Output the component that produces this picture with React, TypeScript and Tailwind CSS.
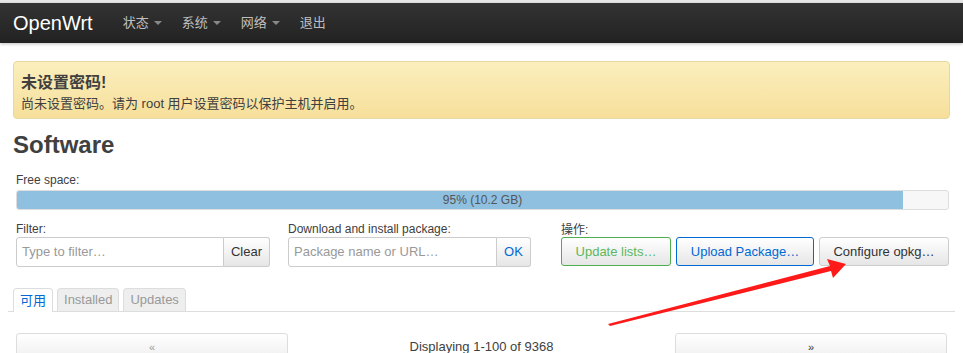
const FONT = "font-['Liberation_Sans','Noto_Sans_CJK_SC',sans-serif]";

const MENU = [
  { label: '状态', caret: true },
  { label: '系统', caret: true },
  { label: '网络', caret: true },
  { label: '退出', caret: false },
];

function Caret() {
  return <span className="ml-[5px] inline-block h-0 w-0 border-x-[4px] border-t-[4px] border-x-transparent border-t-[#888] align-middle" />;
}

export default function App() {
  return (
    <div className={`relative h-[353px] w-[963px] overflow-hidden bg-white ${FONT} text-[#404040]`}>
      <div className="h-[3px] bg-[#e6e6e6]" />
      <nav className="flex h-[40px] items-center bg-gradient-to-b from-[#333] to-[#222] pl-[13px] shadow-[0_1px_3px_rgba(0,0,0,0.25)]">
        <span className="mr-[30px] text-[20px] text-white">OpenWrt</span>
        {MENU.map((m) => (
          <span key={m.label} className="mr-[20px] flex items-center text-[13px] text-[#bfbfbf]">
            {m.label}
            {m.caret && <Caret />}
          </span>
        ))}
      </nav>

      <div className="px-[13px] pt-[18px]">
        <div className="h-[58px] rounded-[4px] border border-[#e6d8a0] bg-gradient-to-b from-[#fbefbd] to-[#f6df9a] px-[7px] pt-[11px] text-[#404040]">
          <div className="text-[16px] font-bold leading-[20px]">未设置密码!</div>
          <div className="mt-[2px] text-[13px] leading-[18px]">尚未设置密码。请为 root 用户设置密码以保护主机并启用。</div>
        </div>

        <h2 className="mt-[12px] text-[24px] font-bold leading-[28px] text-[#404040]">Software</h2>

        <div className="px-[3px]">
          <div className="mt-[14px] text-[12px] leading-[14px]">Free space:</div>
          <div className="relative mt-[3px] h-[20px] w-[933px] overflow-hidden rounded-[3px] border border-[#ddd] bg-[#f7f7f7]">
            <div className="h-full w-[886px] bg-[#8fc0e0]" />
            <div className="absolute inset-0 flex items-center justify-center text-[12px] text-[#555]">95% (10.2 GB)</div>
          </div>

          <div className="mt-[11px] flex">
            <div className="w-[272px] shrink-0">
              <div className="text-[12px] leading-[16px]">Filter:</div>
              <div className="flex h-[30px]">
                <div className="flex w-[208px] items-center rounded-l-[3px] border border-[#ccc] pl-[5px] text-[13px] text-[#999]">Type to filter…</div>
                <div className="flex w-[46px] items-center justify-center rounded-r-[3px] border border-l-0 border-[#ccc] bg-gradient-to-b from-white to-[#e6e6e6] text-[13px] text-[#333]">Clear</div>
              </div>
            </div>
            <div className="w-[273px] shrink-0">
              <div className="text-[12px] leading-[16px]">Download and install package:</div>
              <div className="flex h-[30px]">
                <div className="flex w-[209px] items-center rounded-l-[3px] border border-[#ccc] pl-[5px] text-[13px] text-[#999]">Package name or URL…</div>
                <div className="flex w-[34px] items-center justify-center rounded-r-[3px] border border-l-0 border-[#ccc] bg-gradient-to-b from-white to-[#e6e6e6] text-[13px] text-[#0069d6]">OK</div>
              </div>
            </div>
            <div className="pt-[2px]">
              <div className="text-[12px] leading-[14px]">操作:</div>
              <div className="flex gap-[5px]">
                <div className="flex h-[29px] w-[110px] items-center justify-center rounded-[3px] border border-[#4cae4c] bg-gradient-to-b from-white to-[#e6e6e6] text-[13px] text-[#5cb85c]">Update lists…</div>
                <div className="flex h-[29px] w-[138px] items-center justify-center rounded-[3px] border border-[#0069d6] bg-gradient-to-b from-white to-[#e6e6e6] text-[13px] text-[#0069d6]">Upload Package…</div>
                <div className="flex h-[29px] w-[130px] items-center justify-center rounded-[3px] border border-[#ccc] bg-gradient-to-b from-white to-[#e6e6e6] text-[13px] text-[#333]">Configure opkg…</div>
              </div>
            </div>
          </div>
        </div>
      </div>

      <div className="mx-[8px] mt-[21px] flex h-[24px] items-end gap-[4px] border-b border-[#ddd] pl-[5px]">
        <div className="-mb-px flex h-[24px] items-center rounded-t-[4px] border border-b-0 border-[#ddd] bg-white px-[6px] text-[13px] text-[#0069d6]">可用</div>
        <div className="flex h-[23px] items-center rounded-t-[4px] border border-b-0 border-[#ddd] bg-[#eee] px-[6px] text-[13px] text-[#999]">Installed</div>
        <div className="flex h-[23px] items-center rounded-t-[4px] border border-b-0 border-[#ddd] bg-[#eee] px-[6px] text-[13px] text-[#999]">Updates</div>
      </div>

      <div className="mt-[21px] flex items-start px-[16px]">
        <div className="flex h-[28px] w-[272px] items-center justify-center rounded-[3px] border border-[#ddd] bg-gradient-to-b from-white to-[#eee] text-[11px] text-[#999]">«</div>
        <div className="flex-1 pt-[6px] text-center text-[13px] leading-[16px] text-[#404040]">Displaying 1-100 of 9368</div>
        <div className="flex h-[28px] w-[272px] items-center justify-center rounded-[3px] border border-[#ddd] bg-gradient-to-b from-white to-[#eee] text-[11px] text-[#333]">»</div>
      </div>

      <svg className="pointer-events-none absolute left-0 top-0" width="963" height="353">
        <polygon points="608,324 830,266 827,259 846,264 833,278 831,271 610,326" fill="#ff1a1a" />
      </svg>
    </div>
  );
}
